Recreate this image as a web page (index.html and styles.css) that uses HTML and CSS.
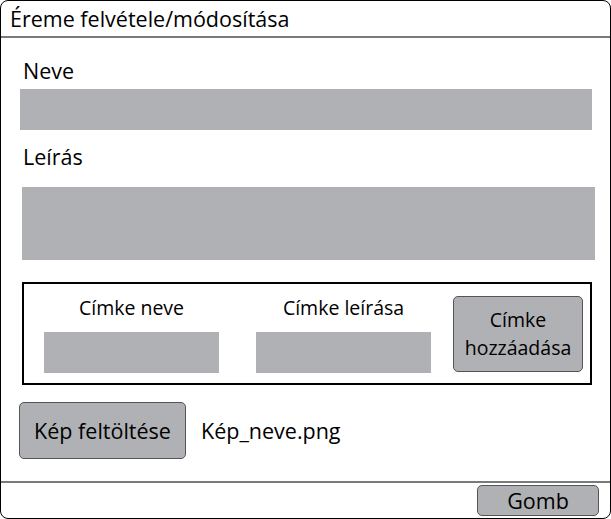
FILE: index.html
```html
<!DOCTYPE html>
<html lang="hu">
<head>
    <meta charset="UTF-8">
    <title>Érem felvétele</title>
    <link rel="stylesheet" href="styles.css">
</head>
<body>
    <div class="window">
        <div class="title-bar">Éreme felvétele/módosítása</div>

        <div class="content">
            <div class="field-label">Neve</div>
            <div class="input input-name"></div>

            <div class="field-label label-desc">Leírás</div>
            <div class="input input-desc"></div>

            <div class="tag-box">
                <div class="tag-field">
                    <div class="tag-label">Címke neve</div>
                    <div class="input tag-input"></div>
                </div>
                <div class="tag-field">
                    <div class="tag-label">Címke leírása</div>
                    <div class="input tag-input"></div>
                </div>
                <button class="btn btn-tag">Címke<br>hozzáadása</button>
            </div>

            <div class="upload-row">
                <button class="btn btn-upload">Kép feltöltése</button>
                <span class="file-name">Kép_neve.png</span>
            </div>
        </div>

        <div class="footer">
            <button class="btn btn-footer">Gomb</button>
        </div>
    </div>
</body>
</html>
```

FILE: styles.css
```css
        body {
            margin: 0;
            padding: 0;
            font-family: 'Open Sans', Lato, sans-serif;
            background-color: #fff;
            color: #000;
        }
        .window {
            width: 609px;
            height: 517px;
            border: 1px solid #000;
            border-radius: 8px;
            display: flex;
            flex-direction: column;
            overflow: hidden;
        }
        .title-bar {
            height: 35px;
            line-height: 35px;
            padding-left: 9px;
            font-size: 21.5px;
            border-bottom: 2px solid #7a7a7a;
        }
        .content {
            flex: 1;
            padding: 19px 0 0 0;
        }
        .field-label {
            font-size: 21.5px;
            margin-left: 22px;
            height: 28px;
            line-height: 28px;
        }
        .input {
            background-color: #b0b1b4;
        }
        .input-name {
            margin: 4px 0 0 19px;
            width: 572px;
            height: 41px;
        }
        .label-desc {
            margin-top: 13px;
        }
        .input-desc {
            margin: 16px 0 0 21px;
            width: 573px;
            height: 73px;
        }
        .tag-box {
            margin: 22px 0 0 21px;
            width: 566px;
            height: 99px;
            border: 2px solid #000;
            display: flex;
            align-items: flex-start;
        }
        .tag-field {
            width: 175px;
            margin-left: 20px;
            margin-top: 11px;
            display: flex;
            flex-direction: column;
            align-items: center;
        }
        .tag-field + .tag-field {
            margin-left: 37px;
        }
        .tag-label {
            font-size: 19.5px;
            height: 26px;
            line-height: 26px;
        }
        .tag-input {
            margin-top: 11px;
            width: 175px;
            height: 41px;
        }
        .btn {
            font-family: inherit;
            background-color: #b0b1b4;
            border: 1px solid #555;
            border-radius: 5px;
            color: #000;
            padding: 0;
            cursor: pointer;
        }
        .btn-tag {
            margin: 12px 0 0 22px;
            width: 130px;
            height: 76px;
            font-size: 19.5px;
            line-height: 28px;
        }
        .upload-row {
            display: flex;
            align-items: center;
            margin: 17px 0 0 18px;
        }
        .btn-upload {
            width: 167px;
            height: 57px;
            font-size: 21.5px;
        }
        .file-name {
            font-size: 21.5px;
            margin-left: 15px;
        }
        .footer {
            height: 35px;
            border-top: 2px solid #7a7a7a;
            display: flex;
            justify-content: flex-end;
            align-items: flex-start;
            padding-right: 11px;
        }
        .btn-footer {
            margin-top: 2px;
            width: 122px;
            height: 31px;
            font-size: 21.5px;
            line-height: 28px;
        }
```
